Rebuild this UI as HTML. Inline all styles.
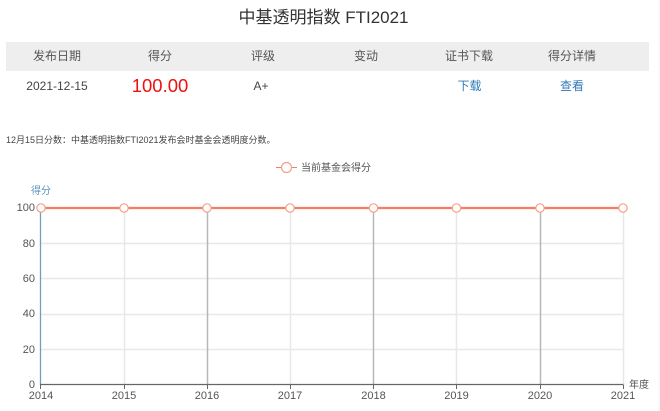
<!DOCTYPE html>
<html lang="zh">
<head>
<meta charset="utf-8">
<style>
html,body{margin:0;padding:0;background:#fff;}
body{width:660px;height:411px;overflow:hidden;position:relative;font-family:"Liberation Sans","Noto Sans CJK SC",sans-serif;color:#333;}
#wrap{position:absolute;left:0;top:0;width:660px;height:411px;filter:blur(0.35px);}
.t{position:absolute;white-space:nowrap;}
.c{transform:translateX(-50%);}
.h{top:48px;font-size:12px;line-height:17px;color:#555;}
.r{top:78px;font-size:12px;line-height:17px;color:#444;}
.l{color:#337ab7;}
#edge{position:absolute;left:658px;top:0;width:2px;height:411px;background:#f9f9f9;}
#bar{position:absolute;left:6px;top:42px;width:643px;height:29px;background:#eeeeee;}
svg{position:absolute;left:0;top:0;}
svg text{font-family:"Liberation Sans","Noto Sans CJK SC",sans-serif;}
</style>
</head>
<body>
<div id="wrap">
<div id="edge"></div>
<div class="t c" style="left:323.500px;top:7px;font-size:17px;line-height:22px;">中基透明指数 FTI2021</div>
<div id="bar"></div>
<div class="t c h" style="left:57px;">发布日期</div>
<div class="t c h" style="left:160px;">得分</div>
<div class="t c h" style="left:263px;">评级</div>
<div class="t c h" style="left:366px;">变动</div>
<div class="t c h" style="left:469px;">证书下载</div>
<div class="t c h" style="left:572px;">得分详情</div>
<div class="t c r" style="left:57px;">2021-12-15</div>
<div class="t c" style="left:160px;top:75px;font-size:18.500px;line-height:22px;color:#ee1111;">100.00</div>
<div class="t c r" style="left:261px;">A+</div>
<div class="t c r l" style="left:469.500px;">下载</div>
<div class="t c r l" style="left:572px;">查看</div>
<div class="t" style="left:6px;top:134px;font-size:9px;line-height:13px;color:#444;">12月15日分数：中基透明指数FTI2021发布会时基金会透明度分数。</div>
<svg width="660" height="411" viewBox="0 0 660 411">
  <g stroke="#e8e8e8" stroke-width="1.500" fill="none">
    <path d="M41 243.500H623M41 278.500H623M41 314.500H623M41 349.500H623"/>
    <path d="M124.500 208V385M290.500 208V385M456.500 208V385M623.500 208V385"/>
  </g>
  <g stroke="#b8b8b8" stroke-width="1.500" fill="none">
    <path d="M207.500 208V385M373.500 208V385M540.500 208V385"/>
  </g>
  <path d="M40.500 208V385" stroke="#6e9fc0" stroke-width="1.300" fill="none"/>
  <path d="M40 384.500H623.500" stroke="#666" stroke-width="1.200" fill="none"/>
  <path d="M40.500 385V389M124.500 385V389M207.500 385V389M290.500 385V389M373.500 385V389M456.500 385V389M540.500 385V389M623.500 385V389" stroke="#666" stroke-width="1" fill="none"/>
  <path d="M41 208H623" stroke="#f47e60" stroke-width="2.200" fill="none"/>
  <g fill="#fff" stroke="#f5a08a" stroke-width="1.200">
    <circle cx="41" cy="208" r="4.200"/><circle cx="124" cy="208" r="4.200"/><circle cx="207" cy="208" r="4.200"/>
    <circle cx="290" cy="208" r="4.200"/><circle cx="373.500" cy="208" r="4.200"/><circle cx="456.500" cy="208" r="4.200"/>
    <circle cx="540" cy="208" r="4.200"/><circle cx="623" cy="208" r="4.200"/>
  </g>
  <path d="M276 167.500H297" stroke="#f47e60" stroke-width="1" fill="none"/>
  <circle cx="286.500" cy="167.500" r="5" fill="#fff" stroke="#f5a08a" stroke-width="1.200"/>
  <text x="301" y="171" font-size="10" fill="#555">当前基金会得分</text>
  <text x="41" y="194" font-size="10" fill="#5b93bf" text-anchor="middle">得分</text>
  <g font-size="11" fill="#555" text-anchor="end">
    <text x="35" y="211">100</text>
    <text x="35" y="247">80</text>
    <text x="35" y="282">60</text>
    <text x="35" y="317">40</text>
    <text x="35" y="353">20</text>
    <text x="35" y="388">0</text>
  </g>
  <g font-size="11" fill="#555" text-anchor="middle">
    <text x="41" y="399">2014</text>
    <text x="124" y="399">2015</text>
    <text x="207" y="399">2016</text>
    <text x="290" y="399">2017</text>
    <text x="373.500" y="399">2018</text>
    <text x="456.500" y="399">2019</text>
    <text x="540" y="399">2020</text>
    <text x="623" y="399">2021</text>
  </g>
  <text x="629" y="388" font-size="10" fill="#555">年度</text>
</svg>
</div>
</body>
</html>
